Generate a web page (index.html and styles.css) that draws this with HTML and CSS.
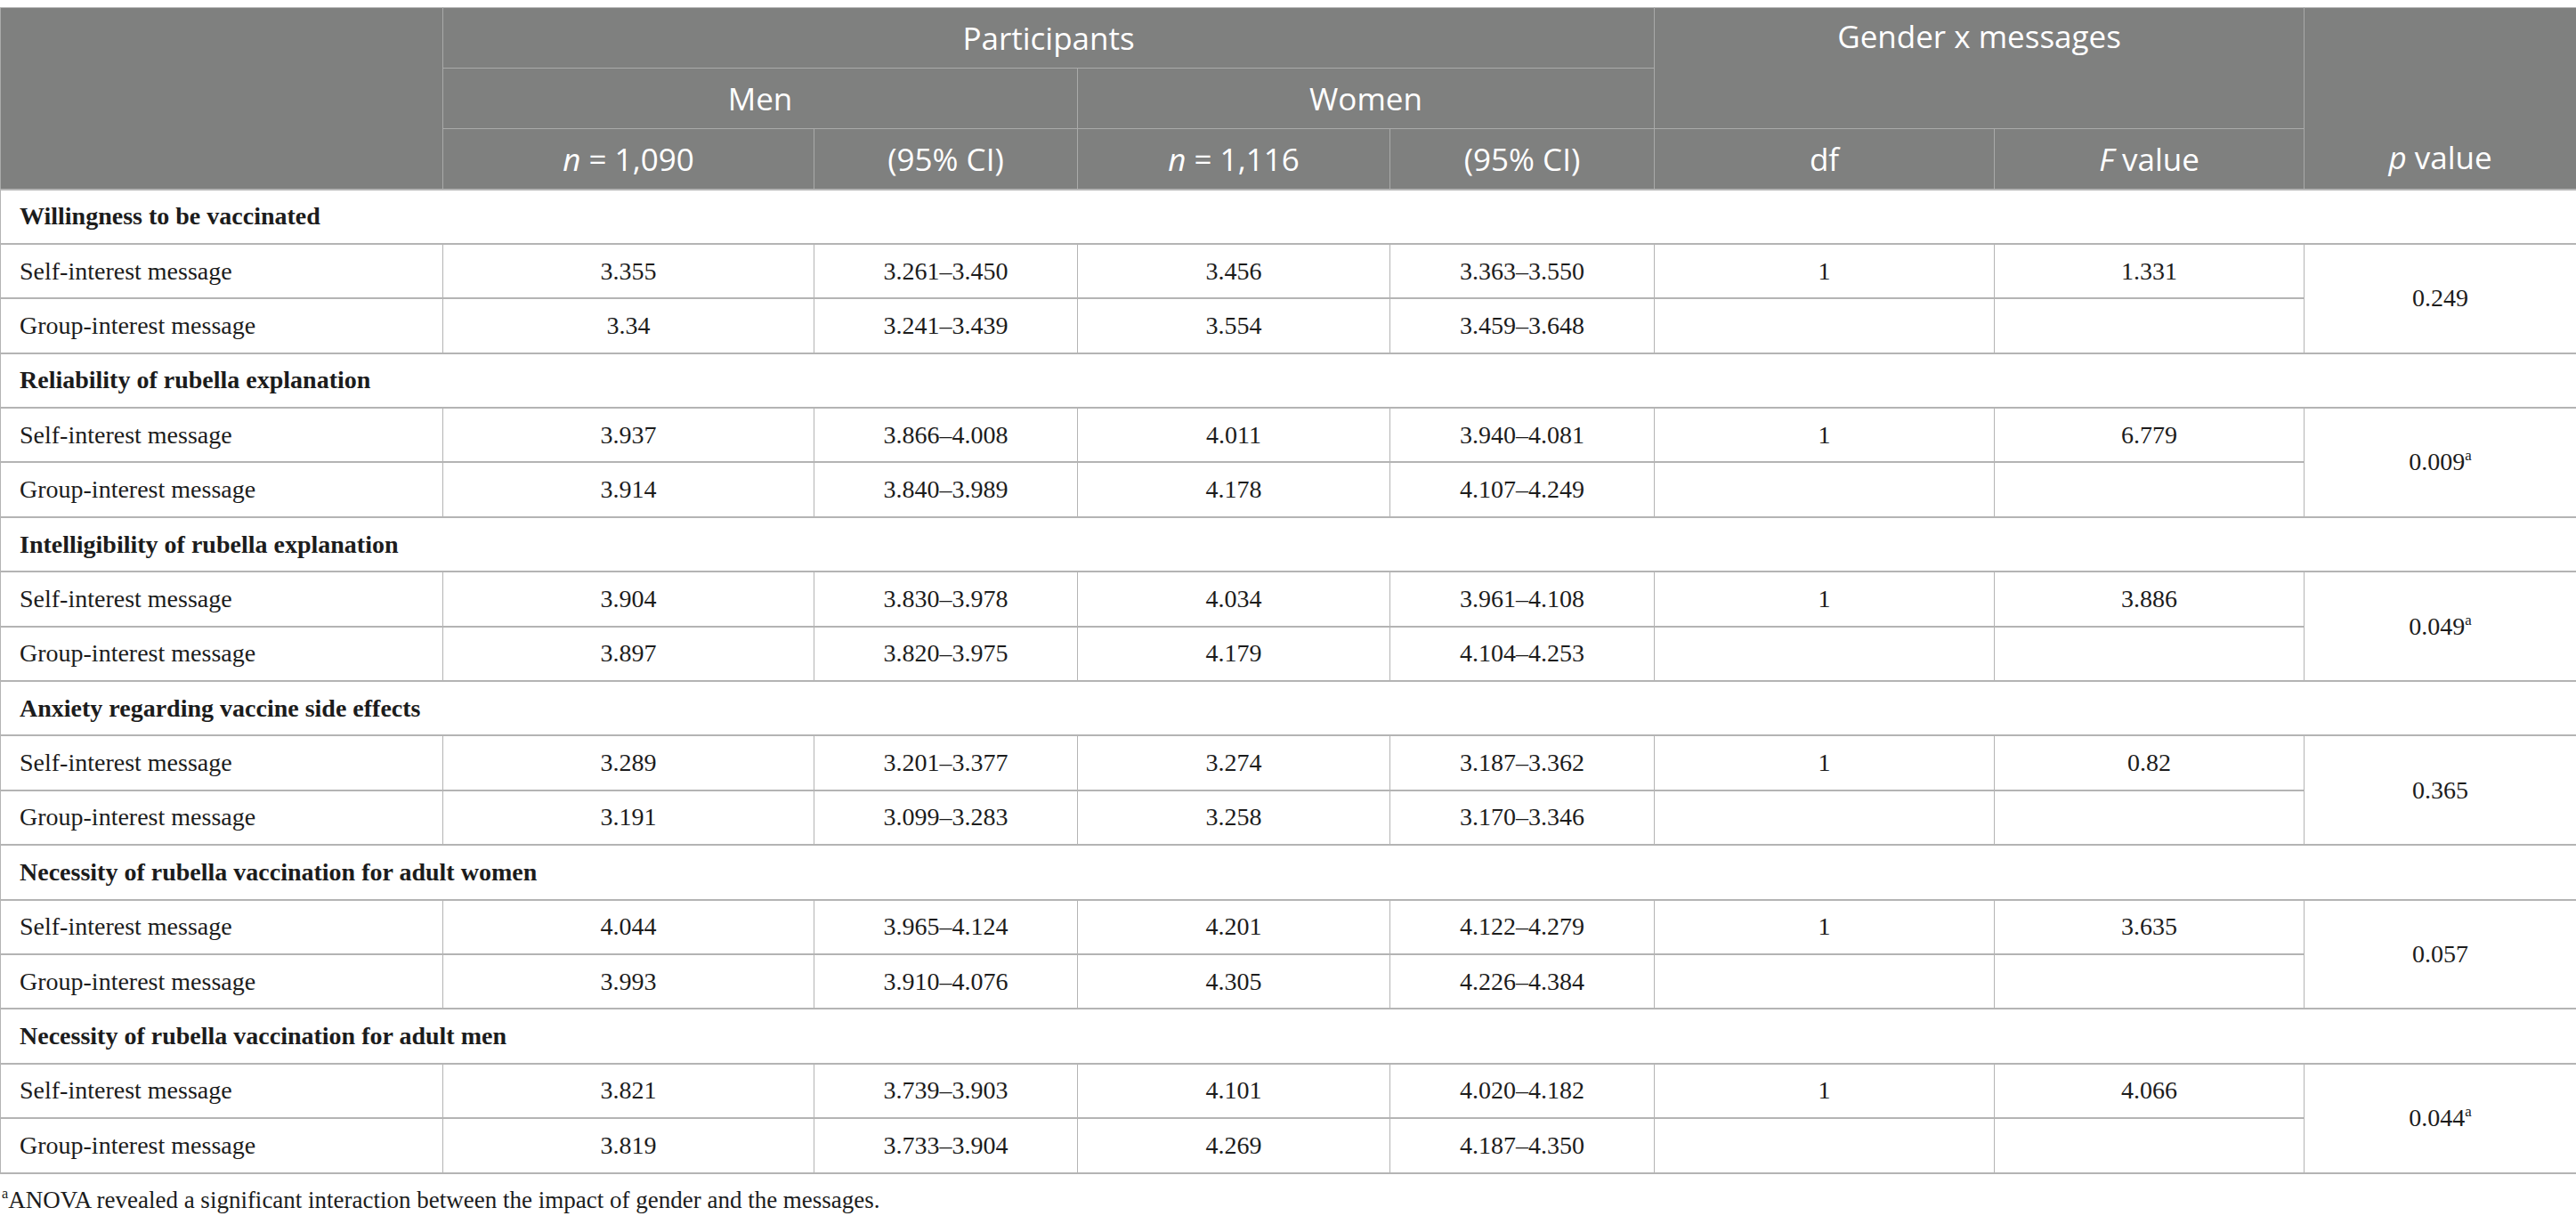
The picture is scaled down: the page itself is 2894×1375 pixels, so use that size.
FILE: index.html
```html
<!DOCTYPE html>
<html lang="en">
<head>
    <meta charset="UTF-8">
    <title>Gender x messages</title>
    <link rel="stylesheet" href="styles.css">
</head>
<body>
    <table class="results">
        <colgroup>
            <col class="c-label">
            <col class="c-men-n">
            <col class="c-men-ci">
            <col class="c-women-n">
            <col class="c-women-ci">
            <col class="c-df">
            <col class="c-f">
            <col class="c-p">
        </colgroup>
        <thead>
            <tr>
                <th rowspan="3" class="blank"></th>
                <th colspan="4">Participants</th>
                <th colspan="2" rowspan="2" class="top">Gender x messages</th>
                <th rowspan="3" class="bottom"><i>p</i> value</th>
            </tr>
            <tr>
                <th colspan="2">Men</th>
                <th colspan="2">Women</th>
            </tr>
            <tr>
                <th><i>n</i> = 1,090</th>
                <th>(95% CI)</th>
                <th><i>n</i> = 1,116</th>
                <th>(95% CI)</th>
                <th>df</th>
                <th><i>F</i> value</th>
            </tr>
        </thead>
        <tbody>
            <tr class="section"><td colspan="8">Willingness to be vaccinated</td></tr>
            <tr>
                <td class="label">Self-interest message</td>
                <td>3.355</td><td>3.261–3.450</td><td>3.456</td><td>3.363–3.550</td>
                <td>1</td><td>1.331</td>
                <td rowspan="2">0.249</td>
            </tr>
            <tr>
                <td class="label">Group-interest message</td>
                <td>3.34</td><td>3.241–3.439</td><td>3.554</td><td>3.459–3.648</td>
                <td></td><td></td>
            </tr>

            <tr class="section"><td colspan="8">Reliability of rubella explanation</td></tr>
            <tr>
                <td class="label">Self-interest message</td>
                <td>3.937</td><td>3.866–4.008</td><td>4.011</td><td>3.940–4.081</td>
                <td>1</td><td>6.779</td>
                <td rowspan="2">0.009<sup>a</sup></td>
            </tr>
            <tr>
                <td class="label">Group-interest message</td>
                <td>3.914</td><td>3.840–3.989</td><td>4.178</td><td>4.107–4.249</td>
                <td></td><td></td>
            </tr>

            <tr class="section"><td colspan="8">Intelligibility of rubella explanation</td></tr>
            <tr>
                <td class="label">Self-interest message</td>
                <td>3.904</td><td>3.830–3.978</td><td>4.034</td><td>3.961–4.108</td>
                <td>1</td><td>3.886</td>
                <td rowspan="2">0.049<sup>a</sup></td>
            </tr>
            <tr>
                <td class="label">Group-interest message</td>
                <td>3.897</td><td>3.820–3.975</td><td>4.179</td><td>4.104–4.253</td>
                <td></td><td></td>
            </tr>

            <tr class="section"><td colspan="8">Anxiety regarding vaccine side effects</td></tr>
            <tr>
                <td class="label">Self-interest message</td>
                <td>3.289</td><td>3.201–3.377</td><td>3.274</td><td>3.187–3.362</td>
                <td>1</td><td>0.82</td>
                <td rowspan="2">0.365</td>
            </tr>
            <tr>
                <td class="label">Group-interest message</td>
                <td>3.191</td><td>3.099–3.283</td><td>3.258</td><td>3.170–3.346</td>
                <td></td><td></td>
            </tr>

            <tr class="section"><td colspan="8">Necessity of rubella vaccination for adult women</td></tr>
            <tr>
                <td class="label">Self-interest message</td>
                <td>4.044</td><td>3.965–4.124</td><td>4.201</td><td>4.122–4.279</td>
                <td>1</td><td>3.635</td>
                <td rowspan="2">0.057</td>
            </tr>
            <tr>
                <td class="label">Group-interest message</td>
                <td>3.993</td><td>3.910–4.076</td><td>4.305</td><td>4.226–4.384</td>
                <td></td><td></td>
            </tr>

            <tr class="section"><td colspan="8">Necessity of rubella vaccination for adult men</td></tr>
            <tr>
                <td class="label">Self-interest message</td>
                <td>3.821</td><td>3.739–3.903</td><td>4.101</td><td>4.020–4.182</td>
                <td>1</td><td>4.066</td>
                <td rowspan="2">0.044<sup>a</sup></td>
            </tr>
            <tr>
                <td class="label">Group-interest message</td>
                <td>3.819</td><td>3.733–3.904</td><td>4.269</td><td>4.187–4.350</td>
                <td></td><td></td>
            </tr>
        </tbody>
    </table>

    <p class="footnote"><sup>a</sup>ANOVA revealed a significant interaction between the impact of gender and the messages.</p>
</body>
</html>
```

FILE: styles.css
```css
* {
    box-sizing: border-box;
}

body {
    margin: 0;
    padding-top: 8px;
    background: #ffffff;
    color: #1c1c1c;
    font-family: "Liberation Serif", "Times New Roman", serif;
}

.results {
    width: 2894px;
    border-collapse: collapse;
    table-layout: fixed;
}

.c-label    { width: 497px; }
.c-men-n    { width: 417px; }
.c-men-ci   { width: 296px; }
.c-women-n  { width: 351px; }
.c-women-ci { width: 297px; }
.c-df       { width: 382px; }
.c-f        { width: 348px; }
.c-p        { width: 306px; }

/* header */
.results thead th {
    background: #7f807f;
    color: #ffffff;
    font-family: "Open Sans", "Noto Sans", sans-serif;
    font-weight: 400;
    font-size: 35px;
    height: 68px;
    padding: 0 10px;
    border: 1px solid #a9aaa9;
    text-align: center;
    vertical-align: middle;
    white-space: nowrap;
}

.results thead th.top {
    vertical-align: top;
    padding-top: 8px;
}

.results thead th.bottom {
    vertical-align: bottom;
    padding-bottom: 12px;
}

.results thead tr:first-child th {
    border-top-color: #b8b8b8;
}

/* body */
.results tbody td {
    height: 61.4px;
    padding: 0 20px;
    font-size: 28px;
    text-align: center;
    vertical-align: middle;
    border: 1px solid #b4b4b4;
    border-top-width: 2px;
    border-bottom-width: 2px;
    white-space: nowrap;
}

.results tbody td.label {
    text-align: left;
    padding-left: 21px;
}

.results .section td {
    text-align: left;
    font-weight: bold;
    padding-left: 21px;
}

.results sup {
    font-size: 0.6em;
    vertical-align: 0.65em;
    line-height: 0;
}

.footnote {
    margin: 14px 0 0 2px;
    font-size: 27px;
}

.footnote sup {
    font-size: 0.6em;
    vertical-align: 0.65em;
    line-height: 0;
}
```
